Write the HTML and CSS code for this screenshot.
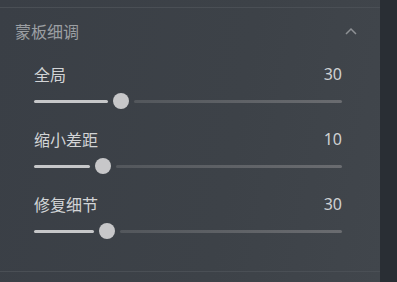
FILE: index.html
```html
<!DOCTYPE html>
<html>
<head>
<meta charset="utf-8">
<link rel="stylesheet" href="styles.css">
</head>
<body>
<div class="app">
  <div class="panel">
    <div class="section">
      <div class="header">
        <span class="title">蒙板细调</span>
        <svg class="chev" width="12" height="8" viewBox="0 0 12 8"><path d="M1 7 L6 2 L11 7" fill="none" stroke="#8e9195" stroke-width="1.5"/></svg>
      </div>
      <div class="rows">
        <div class="row">
          <div class="label"><span>全局</span><span class="val">30</span></div>
          <div class="slider"><div class="fill" style="width:74px"></div><div class="thumb"></div><div class="rest"></div></div>
        </div>
        <div class="row">
          <div class="label"><span>缩小差距</span><span class="val">10</span></div>
          <div class="slider"><div class="fill" style="width:56px"></div><div class="thumb"></div><div class="rest"></div></div>
        </div>
        <div class="row">
          <div class="label"><span>修复细节</span><span class="val">30</span></div>
          <div class="slider"><div class="fill" style="width:60px"></div><div class="thumb"></div><div class="rest"></div></div>
        </div>
      </div>
    </div>
  </div>
  <div class="strip"></div>
</div>
</body>
</html>
```
FILE: styles.css
```css
html, body { margin: 0; padding: 0; }
body {
  width: 397px; height: 282px; overflow: hidden;
  font-family: "Noto Sans CJK SC", "Noto Sans", sans-serif;
}
.app { display: flex; height: 282px; }
.panel {
  width: 380px;
  background: linear-gradient(100deg, #3a3f46 0%, #3d4248 60%, #41464c 100%);
  padding-top: 7px;
  box-sizing: border-box;
}
.strip { flex: 1; background: #292e34; }
.section {
  border-top: 1px solid #4a4f55;
  border-bottom: 1px solid #4a4f55;
}
.header {
  height: 46px;
  display: flex; align-items: center; justify-content: space-between;
  padding: 0 23px 0 15px;
}
.title { color: #9c9fa3; font-size: 16px; line-height: 20px; }
.chev { display: block; }
.rows { padding: 10px 38px 12px 34px; }
.row { height: 65px; }
.label {
  display: flex; justify-content: space-between;
  height: 20px; line-height: 20px;
  font-size: 16px; color: #d2d4d6;
}
.val { font-family: "Noto Sans", sans-serif; font-size: 16px; color: #cfd1d3; }
.slider {
  margin-top: 9px;
  height: 16px;
  display: flex; align-items: center;
}
.fill { height: 3px; border-radius: 2px; background: #c6c7c9; }
.thumb {
  width: 16px; height: 16px; border-radius: 50%;
  background: #c7c7c9; margin: 0 5px; flex: none;
}
.rest {
  flex: 1; height: 3px; border-radius: 2px;
  background: linear-gradient(90deg, #53575c, #6a6c70);
}
```
